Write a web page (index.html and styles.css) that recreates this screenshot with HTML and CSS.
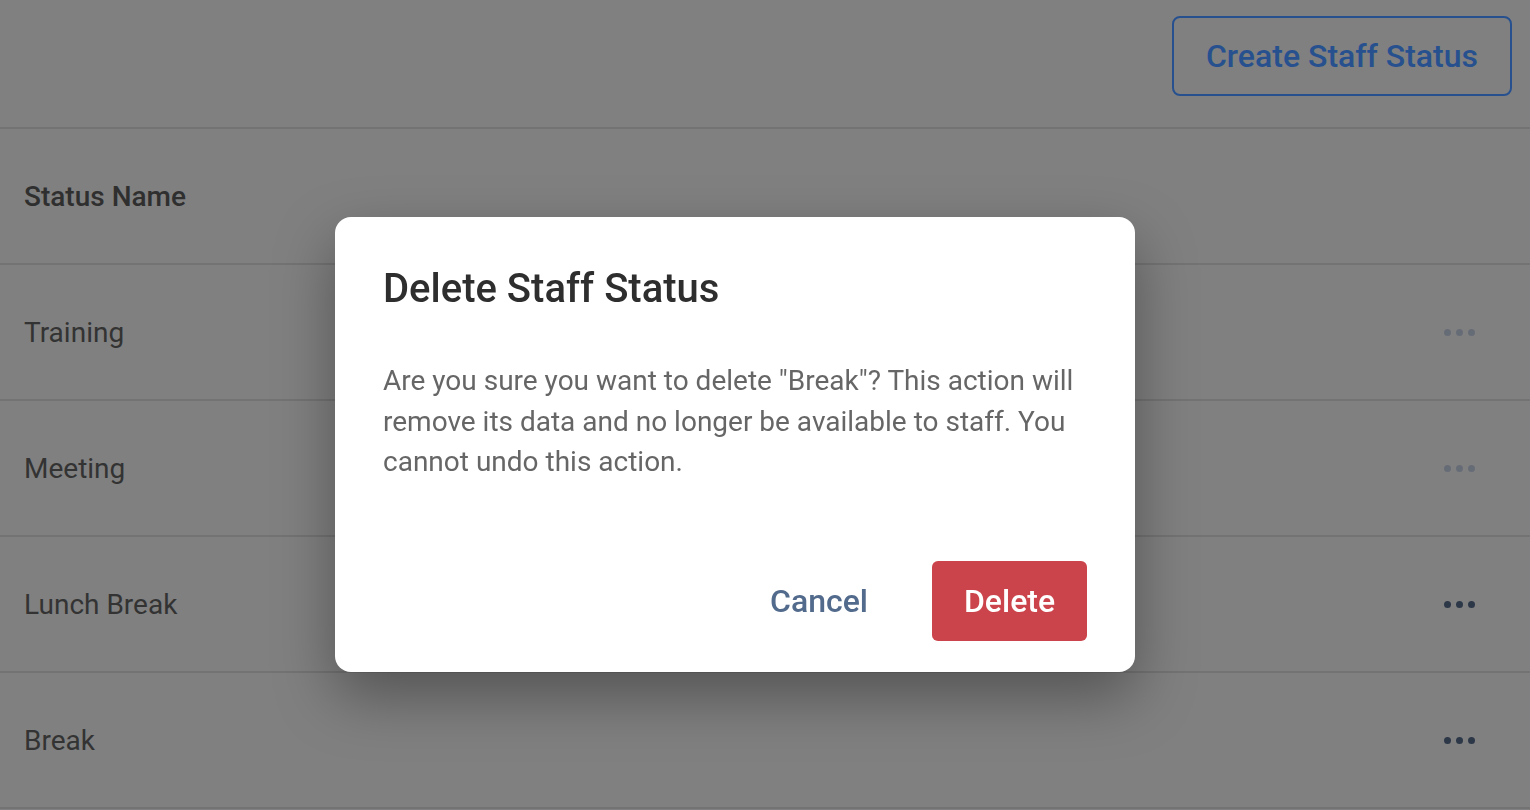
FILE: index.html
```html
<!DOCTYPE html>
<html lang="en">
<head>
<meta charset="utf-8">
<title>Staff Statuses</title>
<link rel="stylesheet" href="styles.css">
</head>
<body>
<div class="page">
  <header class="toolbar">
    <button class="btn-outline">Create Staff Status</button>
  </header>
  <div class="table">
    <div class="row head"><span class="cell-name">Status Name</span></div>
    <div class="row"><span class="cell-name">Training</span><span class="dots light"><i></i><i></i><i></i></span></div>
    <div class="row"><span class="cell-name">Meeting</span><span class="dots light"><i></i><i></i><i></i></span></div>
    <div class="row"><span class="cell-name">Lunch Break</span><span class="dots"><i></i><i></i><i></i></span></div>
    <div class="row"><span class="cell-name">Break</span><span class="dots"><i></i><i></i><i></i></span></div>
  </div>
</div>
<div class="backdrop">
  <div class="dialog">
    <h2 class="dialog-title">Delete Staff Status</h2>
    <p class="dialog-text">Are you sure you want to delete "Break"? This action will remove its data and no longer be available to staff. You cannot undo this action.</p>
    <div class="dialog-actions">
      <button class="btn-text">Cancel</button>
      <button class="btn-danger">Delete</button>
    </div>
  </div>
</div>
</body>
</html>
```
FILE: styles.css
```css
* { box-sizing: border-box; }
html, body { margin: 0; padding: 0; }
body {
  background: #808080;
  font-family: Roboto, "Liberation Sans", sans-serif;
  width: 1530px;
  height: 810px;
  overflow: hidden;
}
.page { width: 1530px; }
.toolbar {
  height: 129px;
  display: flex;
  justify-content: flex-end;
  align-items: flex-start;
  padding: 16px 18px 0 0;
  border-bottom: 2px solid #737373;
}
.btn-outline {
  height: 80px;
  width: 340px;
  background: transparent;
  border: 2px solid #27508f;
  border-radius: 8px;
  color: #27508f;
  font-family: inherit;
  font-size: 32px;
  font-weight: 500;
  padding: 0;
}
.table { display: flex; flex-direction: column; }
.row {
  height: 136px;
  display: flex;
  align-items: center;
  justify-content: space-between;
  padding: 0 55px 0 24px;
  border-bottom: 2px solid #737373;
  color: #333333;
  font-size: 28px;
}
.head { font-weight: 500; color: #2f2f2f; }
.dots { display: flex; gap: 5px; }
.dots i { width: 7px; height: 7px; border-radius: 50%; background: #2c3748; display: block; }
.dots.light i { background: #666c76; }
.backdrop {
  position: fixed;
  inset: 0;
  padding: 217px 0 0 335px;
}
.dialog {
  width: 800px;
  height: 455px;
  background: #ffffff;
  border-radius: 16px;
  padding: 48px 48px 31px 48px;
  display: flex;
  flex-direction: column;
  box-shadow: 0 24px 60px rgba(0,0,0,0.35);
}
.dialog-title {
  margin: 0;
  font-size: 40px;
  font-weight: 500;
  line-height: 48px;
  color: #2e2e2e;
}
.dialog-text {
  margin: 48px 0 0 0;
  font-size: 28px;
  line-height: 40.5px;
  color: #666666;
}
.dialog-actions {
  margin-top: auto;
  display: flex;
  justify-content: flex-end;
  align-items: center;
  gap: 32px;
}
.btn-text {
  background: none;
  border: none;
  font-family: inherit;
  font-size: 32px;
  font-weight: 500;
  color: #526a8c;
  padding: 0 32px;
  height: 80px;
}
.btn-danger {
  width: 155px;
  height: 80px;
  background: #cc444b;
  border: none;
  border-radius: 6px;
  color: #ffffff;
  font-family: inherit;
  font-size: 32px;
  font-weight: 500;
  padding: 0;
}
```
